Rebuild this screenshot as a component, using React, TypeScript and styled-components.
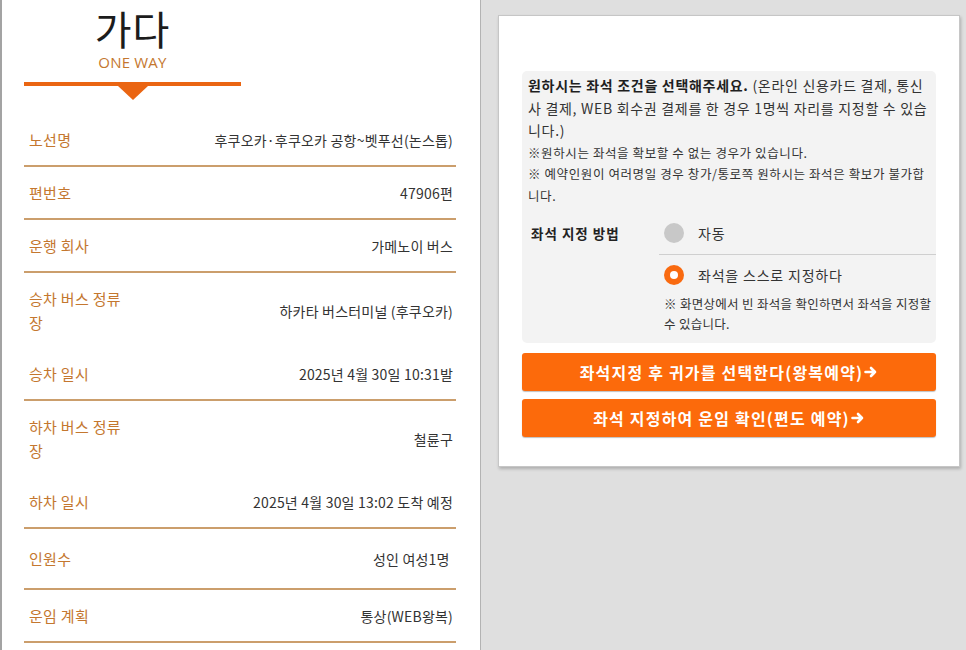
import React from 'react';
import styled, { createGlobalStyle } from 'styled-components';

const ORANGE = '#f96a10';
const LABEL = '#c4772f';

const GlobalStyle = createGlobalStyle`
  html, body {
    margin: 0;
    padding: 0;
    height: 100%;
    overflow: hidden;
  }
  body {
    font-family: "Noto Sans CJK KR", "Noto Sans", sans-serif;
    color: #333;
    background: #dfdfdf;
  }
  #root {
    height: 100%;
  }
`;

const Page = styled.div`
  display: flex;
  height: 100%;
`;

// Left: trip summary
const InfoPanel = styled.section`
  box-sizing: border-box;
  width: 481px;
  flex: none;
  background: #fff;
  border-left: 2px solid #a3a3a3;
  border-right: 1px solid #b3b3b3;
  padding: 5px 24px 0 22px;
`;

const Heading = styled.header`
  width: 217px;
  display: flex;
  flex-direction: column;
  align-items: center;
`;

const Title = styled.h1`
  margin: 0;
  font-size: 40px;
  line-height: 46px;
  font-weight: 400;
  color: #1c1c1c;
  letter-spacing: 1px;
`;

const SubTitle = styled.div`
  margin-top: 2px;
  font-family: "Open Sans", "Noto Sans", sans-serif;
  font-size: 15px;
  line-height: 18px;
  color: ${LABEL};
  letter-spacing: 0.2px;
`;

const Bar = styled.div`
  align-self: stretch;
  height: 4px;
  margin-top: 11px;
  background: #ea6512;
`;

const Pointer = styled.div`
  width: 0;
  height: 0;
  border-left: 15px solid transparent;
  border-right: 15px solid transparent;
  border-top: 14px solid #ea6512;
`;

const RowList = styled.dl`
  margin: 14px 0 0;
`;

const Row = styled.div<{ $open?: boolean; $roomy?: boolean }>`
  display: flex;
  align-items: center;
  justify-content: space-between;
  padding: ${({ $roomy }) => ($roomy ? '17.5px' : '13.5px')} 3px;
  padding-left: 5px;
  border-bottom: ${({ $open }) => ($open ? 'none' : '2px solid #cb9e6c')};
`;

const Label = styled.dt`
  width: 100px;
  font-size: 15px;
  line-height: 24px;
  color: ${LABEL};
  letter-spacing: 0.3px;
`;

const Value = styled.dd`
  margin: 0;
  font-size: 14px;
  line-height: 24px;
  color: #333;
  text-align: right;
  letter-spacing: 0.2px;
`;

// Right: seat selection
const SidePane = styled.div`
  flex: 1;
  padding: 15px 5px 0 17px;
`;

const Card = styled.div`
  box-sizing: border-box;
  width: 462px;
  background: #fff;
  border: 1px solid #c6c6c6;
  box-shadow: 1px 2px 3px rgba(0, 0, 0, 0.22);
  padding: 55px 23px 29px;
`;

const OptionBox = styled.div`
  background: #f3f3f3;
  border-radius: 5px;
  padding: 3px 0 9px 6px;
`;

const Intro = styled.p`
  margin: 0;
  font-size: 14px;
  line-height: 22.5px;
  letter-spacing: 0.7px;
  color: #333;
  strong {
    color: #1f1f1f;
  }
`;

const Notice = styled.p`
  margin: 0;
  font-size: 12.5px;
  line-height: 21.5px;
  letter-spacing: 0.6px;
  color: #333;
`;

const Method = styled.div`
  display: grid;
  grid-template-columns: 131px 1fr;
  margin-top: 6px;
`;

const MethodLabel = styled.div`
  padding: 11px 0 0 3px;
  font-size: 13.5px;
  line-height: 20px;
  font-weight: 700;
  letter-spacing: 1px;
  color: #222;
`;

const Option = styled.label<{ $divider?: boolean; $top: number }>`
  display: flex;
  align-items: center;
  gap: 14px;
  padding: ${({ $top }) => $top}px 0 ${({ $divider }) => ($divider ? 11 : 0)}px 5px;
  border-bottom: ${({ $divider }) => ($divider ? '1px solid #cfcfcf' : 'none')};
  font-size: 14px;
  line-height: 20px;
  letter-spacing: 0.8px;
  color: #333;
`;

const Radio = styled.span<{ $checked?: boolean }>`
  width: 20px;
  height: 20px;
  flex: none;
  border-radius: 50%;
  background: ${({ $checked }) => ($checked ? ORANGE : '#c8c8c8')};
  display: flex;
  align-items: center;
  justify-content: center;
  &::after {
    content: '';
    width: 8px;
    height: 8px;
    border-radius: 50%;
    background: #fff;
    display: ${({ $checked }) => ($checked ? 'block' : 'none')};
  }
`;

const OptionNote = styled.p`
  margin: 9px 0 0;
  padding: 0 0 0 5px;
  font-size: 12.5px;
  line-height: 20px;
  letter-spacing: 0.3px;
  color: #333;
`;

const Actions = styled.div`
  display: flex;
  flex-direction: column;
  gap: 8px;
  margin-top: 10px;
`;

const ActionButton = styled.button`
  height: 38px;
  display: flex;
  align-items: center;
  justify-content: center;
  gap: 1px;
  border: none;
  border-radius: 3px;
  background: #fc6a0b;
  box-shadow: 0 1px 1px rgba(0, 0, 0, 0.25);
  color: #fff;
  font-family: "Noto Sans CJK KR", "Noto Sans", sans-serif;
  font-size: 16px;
  font-weight: 700;
  letter-spacing: 1.2px;
  cursor: pointer;
`;

const Arrow = () => (
  <svg width="14" height="14" viewBox="0 0 14 14" fill="none">
    <path d="M1.5 7h9.5M7 3l4 4-4 4" stroke="#fff" strokeWidth="2.6" strokeLinecap="round" strokeLinejoin="round" />
  </svg>
);

const rows = [
  { label: '노선명', value: '후쿠오카·후쿠오카 공항~벳푸선(논스톱)' },
  { label: '편번호', value: '47906편' },
  { label: '운행 회사', value: '가메노이 버스' },
  { label: '승차 버스 정류장', value: '하카타 버스터미널 (후쿠오카)', open: true },
  { label: '승차 일시', value: '2025년 4월 30일 10:31발' },
  { label: '하차 버스 정류장', value: '철륜구', open: true },
  { label: '하차 일시', value: '2025년 4월 30일 13:02 도착 예정' },
  { label: '인원수', value: '성인 여성1명\u00a0', roomy: true },
  { label: '운임 계획', value: '통상(WEB왕복)' },
];

function App() {
  return (
    <>
      <GlobalStyle />
      <Page>
        <InfoPanel>
          <Heading>
            <Title>가다</Title>
            <SubTitle>ONE WAY</SubTitle>
            <Bar />
            <Pointer />
          </Heading>
          <RowList>
            {rows.map((r) => (
              <Row key={r.label} $open={r.open} $roomy={r.roomy}>
                <Label>{r.label}</Label>
                <Value>{r.value}</Value>
              </Row>
            ))}
          </RowList>
        </InfoPanel>

        <SidePane>
          <Card>
            <OptionBox>
              <Intro>
                <strong>원하시는 좌석 조건을 선택해주세요.</strong> (온라인 신용카드 결제, 통신
                <br />
                사 결제, WEB 회수권 결제를 한 경우 1명씩 자리를 지정할 수 있습
                <br />
                니다.)
              </Intro>
              <Notice>※원하시는 좌석을 확보할 수 없는 경우가 있습니다.</Notice>
              <Notice>
                ※ 예약인원이 여러명일 경우 창가/통로쪽 원하시는 좌석은 확보가 불가합
                <br />
                니다.
              </Notice>
              {/* Seat assignment method */}
              <Method>
                <MethodLabel>좌석 지정 방법</MethodLabel>
                <div>
                  <Option $divider $top={11}>
                    <Radio />
                    자동
                  </Option>
                  <Option $top={10}>
                    <Radio $checked />
                    좌석을 스스로 지정하다
                  </Option>
                  <OptionNote>※ 화면상에서 빈 좌석을 확인하면서 좌석을 지정할 수 있습니다.</OptionNote>
                </div>
              </Method>
            </OptionBox>
            <Actions>
              <ActionButton>
                좌석지정 후 귀가를 선택한다(왕복예약)
                <Arrow />
              </ActionButton>
              <ActionButton>
                좌석 지정하여 운임 확인(편도 예약)
                <Arrow />
              </ActionButton>
            </Actions>
          </Card>
        </SidePane>
      </Page>
    </>
  );
}

export default App;
